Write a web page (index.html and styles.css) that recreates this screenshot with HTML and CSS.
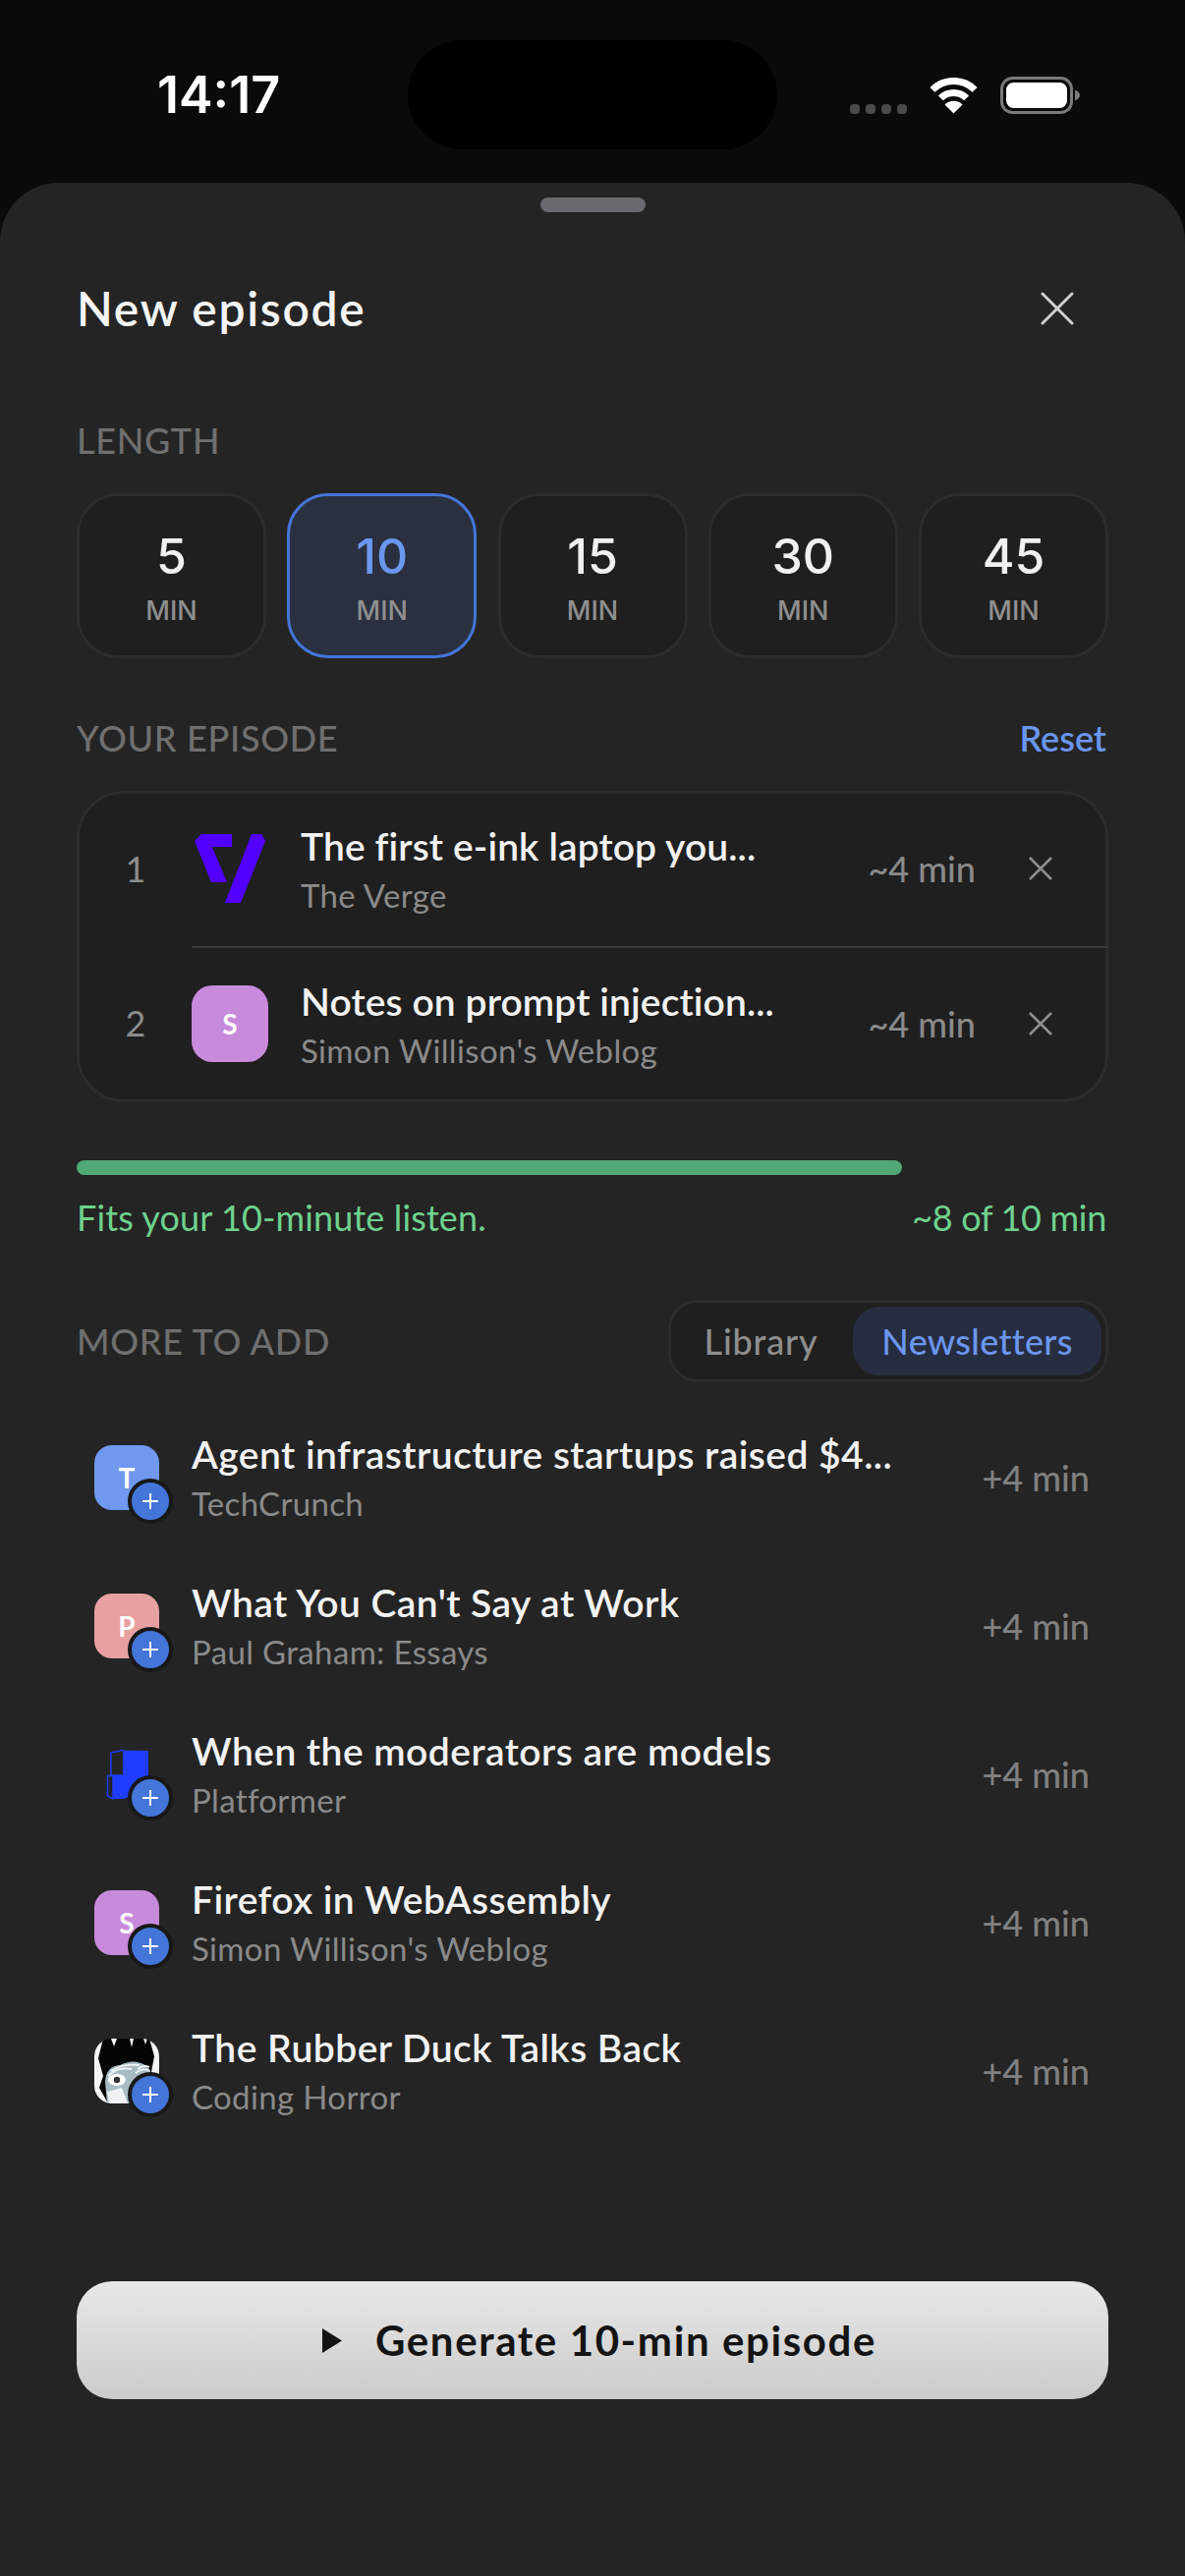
FILE: index.html
```html
<!DOCTYPE html>
<html lang="en">
<head>
<meta charset="utf-8">
<title>New episode</title>
<link rel="stylesheet" href="styles.css">
</head>
<body>
<div class="screen">
  <header class="status">
    <span class="clock">14:17</span>
    <span class="island"></span>
    <div class="status-icons">
      <span class="signal"><i></i><i></i><i></i><i></i></span>
      <svg class="wifi" width="51" height="37" viewBox="0 0 51 37"><path d="M3.9 12.4A30.5 30.5 0 0 1 47.1 12.4" fill="none" stroke="#fff" stroke-width="7"/><path d="M12.4 20.9A18.5 18.5 0 0 1 38.6 20.9" fill="none" stroke="#fff" stroke-width="7"/><path d="M25.5 36.5L16.5 27.5A12.7 12.7 0 0 1 34.5 27.5Z" fill="#fff"/></svg>
      <svg class="battery" width="81" height="38" viewBox="0 0 81 38"><rect x="1.5" y="1.5" width="71" height="35" rx="11" fill="none" stroke="#7a7a7a" stroke-width="3"/><rect x="6" y="6" width="62" height="26" rx="7.5" fill="#fff"/><path d="M76 13.5C79 14.5 81 16.500 81 19C81 21.500 79 23.500 76 24.500Z" fill="#7a7a7a"/></svg>
    </div>
  </header>

  <main class="sheet">
    <div class="handle"></div>
    <div class="sheet-head">
      <h1 class="sheet-title">New episode</h1>
      <svg class="close" width="34" height="34" viewBox="0 0 34 34"><path d="M2 2L32 32M32 2L2 32" stroke="#d0d0d0" stroke-width="3" stroke-linecap="round"/></svg>
    </div>

    <div class="label label-length">LENGTH</div>
    <div class="lengths">
      <div class="len"><span class="len-num">5</span><span class="len-unit">MIN</span></div>
      <div class="len len-on"><span class="len-num">10</span><span class="len-unit">MIN</span></div>
      <div class="len"><span class="len-num">15</span><span class="len-unit">MIN</span></div>
      <div class="len"><span class="len-num">30</span><span class="len-unit">MIN</span></div>
      <div class="len"><span class="len-num">45</span><span class="len-unit">MIN</span></div>
    </div>

    <div class="label-row">
      <span class="label">YOUR EPISODE</span>
      <span class="reset">Reset</span>
    </div>

    <section class="episode">
      <div class="ep-row">
        <span class="ep-index ep-index-first">1</span>
        <div class="ep-main ep-main-first">
          <span class="ep-icon">
            <svg width="78" height="78" viewBox="0 0 78 78"><path d="M10 4H41V17H21L36 53H20L3 11Z" fill="#5200ff"/><path d="M61 4H71L75 11L50 74H34Z" fill="#5200ff"/></svg>
          </span>
          <div class="item-text">
            <div class="item-title">The first e-ink laptop you...</div>
            <div class="item-source">The Verge</div>
          </div>
          <span class="ep-time">~4 min</span>
          <svg class="ep-x" width="24" height="24" viewBox="0 0 24 24"><path d="M1 1L23 23M23 1L1 23" stroke="#8f8f8f" stroke-width="2.500"/></svg>
        </div>
      </div>
      <div class="ep-row">
        <span class="ep-index">2</span>
        <div class="ep-main ep-main-rule">
          <span class="ep-icon ep-icon-letter tile-s">S</span>
          <div class="item-text">
            <div class="item-title">Notes on prompt injection...</div>
            <div class="item-source">Simon Willison's Weblog</div>
          </div>
          <span class="ep-time">~4 min</span>
          <svg class="ep-x" width="24" height="24" viewBox="0 0 24 24"><path d="M1 1L23 23M23 1L1 23" stroke="#8f8f8f" stroke-width="2.500"/></svg>
        </div>
      </div>
    </section>

    <div class="bar"><div class="bar-fill"></div></div>
    <div class="fit">
      <span class="fit-note">Fits your 10-minute listen.</span>
      <span class="fit-total">~8 of 10 min</span>
    </div>

    <div class="more-head">
      <span class="label">MORE TO ADD</span>
      <div class="toggle">
        <span class="tab tab-off">Library</span>
        <span class="tab tab-on">Newsletters</span>
      </div>
    </div>

    <ul class="list">
      <li class="add">
        <span class="tile tile-t">T<span class="plus"><svg width="16" height="16" viewBox="0 0 16 16"><path d="M8 0V16M0 8H16" stroke="#fff" stroke-width="2"/></svg></span></span>
        <div class="item-text">
          <div class="item-title">Agent infrastructure startups raised $4...</div>
          <div class="item-source">TechCrunch</div>
        </div>
        <span class="add-time">+4 min</span>
      </li>
      <li class="add">
        <span class="tile tile-p">P<span class="plus"><svg width="16" height="16" viewBox="0 0 16 16"><path d="M8 0V16M0 8H16" stroke="#fff" stroke-width="2"/></svg></span></span>
        <div class="item-text">
          <div class="item-title">What You Can't Say at Work</div>
          <div class="item-source">Paul Graham: Essays</div>
        </div>
        <span class="add-time">+4 min</span>
      </li>
      <li class="add">
        <span class="tile tile-img">
          <svg width="66" height="66" viewBox="0 0 66 66"><path d="M29 8.500L55 9V46L30 58H19V34H29Z" fill="#1f3cff"/><path d="M29 8.500L17 11V34H29" fill="none" stroke="#1f3cff" stroke-width="1.500"/><path d="M19 34.500H13.500V55L19 58Z" fill="none" stroke="#1f3cff" stroke-width="1.500"/></svg>
          <span class="plus"><svg width="16" height="16" viewBox="0 0 16 16"><path d="M8 0V16M0 8H16" stroke="#fff" stroke-width="2"/></svg></span>
        </span>
        <div class="item-text">
          <div class="item-title">When the moderators are models</div>
          <div class="item-source">Platformer</div>
        </div>
        <span class="add-time">+4 min</span>
      </li>
      <li class="add">
        <span class="tile tile-s">S<span class="plus"><svg width="16" height="16" viewBox="0 0 16 16"><path d="M8 0V16M0 8H16" stroke="#fff" stroke-width="2"/></svg></span></span>
        <div class="item-text">
          <div class="item-title">Firefox in WebAssembly</div>
          <div class="item-source">Simon Willison's Weblog</div>
        </div>
        <span class="add-time">+4 min</span>
      </li>
      <li class="add">
        <span class="tile tile-img">
          <svg width="66" height="66" viewBox="0 0 66 66">
            <rect width="66" height="66" fill="#050505"/>
            <path d="M0 0H9L4 20L9 38L5 50L14 66H0Z" fill="#f4f4f4"/>
            <path d="M66 0H56L61 18L58 34L66 50Z" fill="#f4f4f4"/>
            <path d="M17 0L20 8L23 0ZM36 0L38 9L40 0ZM50 0L52 6L54 0Z" fill="#f4f4f4"/>
            <path d="M11 44Q12 28 26 27Q40 20 52 27Q60 32 58 46L54 66H13Z" fill="#a8bcc4"/>
            <path d="M14 38Q24 28 38 31M17 33Q28 25 46 27M42 35Q50 29 56 33M44 31Q50 26 56 29" fill="none" stroke="#f2f6f6" stroke-width="1.800"/>
            <ellipse cx="23" cy="42" rx="9" ry="6" fill="#fff"/>
            <circle cx="23" cy="42" r="3.200" fill="#333"/>
            <path d="M13 54L28 50L34 66H15Z" fill="#eef2f3"/>
            <path d="M35 57L50 62L48 66H36Z" fill="#111"/>
          </svg>
          <span class="plus"><svg width="16" height="16" viewBox="0 0 16 16"><path d="M8 0V16M0 8H16" stroke="#fff" stroke-width="2"/></svg></span>
        </span>
        <div class="item-text">
          <div class="item-title">The Rubber Duck Talks Back</div>
          <div class="item-source">Coding Horror</div>
        </div>
        <span class="add-time">+4 min</span>
      </li>
    </ul>

    <div class="generate">
      <svg class="play" width="20" height="25" viewBox="0 0 20 25"><path d="M0 0L20 12.500L0 25Z" fill="#141414"/></svg>
      <span>Generate 10-min episode</span>
    </div>
  </main>
</div>
</body>
</html>
```

FILE: styles.css
```css
* { box-sizing: border-box; }
html, body { margin: 0; padding: 0; background: #0a0a0a; }
body { font-family: "Lato", "Liberation Sans", sans-serif; }
.screen { width: 1206px; height: 2622px; overflow: hidden; display: flex; flex-direction: column; }

.status { height: 186px; flex: none; display: flex; align-items: center; padding: 7px 107px 0 160px; background: #0a0a0a; }
.clock { width: 255px; font: 600 52px/60px "Inter", sans-serif; color: #fff; }
.island { width: 376px; height: 111px; border-radius: 56px; background: #000; }
.status-icons { margin-left: auto; display: flex; align-items: flex-start; }
.signal { display: flex; gap: 6px; margin-top: 28px; margin-right: 22px; }
.signal i { width: 10px; height: 10px; border-radius: 4px; background: #4a4a4a; }
.wifi { margin-right: 22px; margin-top: 1px; }

.sheet { flex: 1; background: #242424; border-radius: 60px 60px 0 0; padding: 15px 78px 0; }
.handle { width: 107px; height: 15px; margin: 0 auto; border-radius: 8px; background: #6a6a6e; }
.sheet-head { display: flex; align-items: center; justify-content: space-between; height: 60px; margin-top: 68px; padding-right: 35px; }
.sheet-title { margin: 0; font-size: 48px; line-height: 60px; font-weight: 600; letter-spacing: 1.7px; color: #f5f5f5; }

.label { font-size: 36px; line-height: 40px; letter-spacing: 0.7px; color: #6f6f6f; font-weight: 500; }
.label-length { margin-top: 84px; }
.lengths { display: flex; justify-content: space-between; margin-top: 34px; }
.len { width: 193px; height: 168px; display: flex; flex-direction: column; align-items: center; padding-top: 31px; background: #1f1f1f; border: 3px solid #2c2c2c; border-radius: 42px; }
.len-num { font: 500 50px/60px "Inter", sans-serif; color: #f0f0f0; }
.len-unit { font: 500 27px/32px "Inter", sans-serif; color: #8f8f8f; margin-top: 10px; }
.len-on { background: #2a3040; border-color: #4475d8; }
.len-on .len-num { color: #6b96ee; }

.label-row { display: flex; justify-content: space-between; align-items: center; height: 40px; margin-top: 61px; }
.reset { font-size: 36px; line-height: 40px; font-weight: 600; color: #6b96ee; padding-right: 2px; }

.episode { margin-top: 34px; height: 317px; background: #1f1f1f; border: 3px solid #2c2c2c; border-radius: 48px; }
.ep-row { display: flex; height: 155px; }
.ep-row + .ep-row { height: 156px; }
.ep-index { width: 114px; flex: none; display: flex; align-items: center; justify-content: center; font-size: 36px; color: #8c8c8c; }
.ep-index-first { padding-bottom: 3px; }
.ep-main { flex: 1; display: flex; align-items: center; margin-right: -3px; padding-right: 57px; }
.ep-main-first { padding-bottom: 3px; }
.ep-main-rule { border-top: 2px solid #3a3a3a; }
.ep-icon { width: 78px; height: 78px; flex: none; margin-right: 33px; }
.ep-icon-letter { display: flex; align-items: center; justify-content: center; border-radius: 21px; font-size: 28px; font-weight: 700; color: #fff; }
.item-text { flex: 1; min-width: 0; padding-top: 2px; }
.item-title { font-size: 39px; line-height: 50px; font-weight: 600; letter-spacing: 0.45px; color: #f2f2f2; white-space: nowrap; }
.ep-main .item-title { letter-spacing: 0.1px; }
.item-source { font-size: 33px; line-height: 48px; margin-top: 1px; letter-spacing: 0.35px; color: #8a8a8a; white-space: nowrap; }
.ep-time { font-size: 36px; color: #8a8a8a; font-weight: 500; }
.ep-x { margin-left: 54px; flex: none; }

.bar { margin-top: 59px; height: 15px; }
.bar-fill { width: 840px; height: 15px; border-radius: 8px; background: #4fa876; }
.fit { display: flex; justify-content: space-between; margin-top: 21px; font-size: 36px; line-height: 44px; color: #6fd18e; padding-right: 2px; }
.fit-note { letter-spacing: 0.12px; }
.fit-total { letter-spacing: -0.3px; }

.more-head { display: flex; justify-content: space-between; align-items: center; margin-top: 62px; height: 84px; }
.toggle { width: 448px; height: 84px; display: flex; align-items: center; padding: 4px; background: #1f1f1f; border: 3px solid #2c2c2c; border-radius: 30px; }
.tab { font-size: 36px; line-height: 70px; font-weight: 500; color: #8e8e8e; height: 70px; text-align: center; }
.tab-off { width: 181px; padding-right: 6px; letter-spacing: 0.8px; }
.tab-on { flex: 1; background: #262d40; color: #6b96ee; border-radius: 27px; letter-spacing: 0.3px; }

.list { list-style: none; margin: 21px 0 0; padding: 0 19px 0 18px; }
.add { height: 151px; display: flex; align-items: center; }
.tile { position: relative; width: 66px; height: 66px; flex: none; margin-right: 33px; border-radius: 18px; display: flex; align-items: center; justify-content: center; font-size: 28px; font-weight: 700; color: #fff; }
.tile-t { background: #6f98ee; }
.tile-p { background: #e8a0a0; }
.tile-s { background: #c88bdb; }
.tile-img svg { display: block; border-radius: 18px; }
.plus { position: absolute; left: 34px; top: 34px; width: 46px; height: 46px; display: flex; align-items: center; justify-content: center; background: #4475d8; border: 4px solid #181818; border-radius: 50%; }
.add-time { font-size: 36px; font-weight: 500; color: #808080; }

.generate { height: 120px; margin-top: 139px; display: flex; align-items: center; justify-content: center; gap: 34px; padding-left: 14px; border-radius: 36px; background: linear-gradient(180deg, #e8e8e8, #cbcbcb); font-size: 42px; font-weight: 700; letter-spacing: 1.6px; color: #141414; }
```
